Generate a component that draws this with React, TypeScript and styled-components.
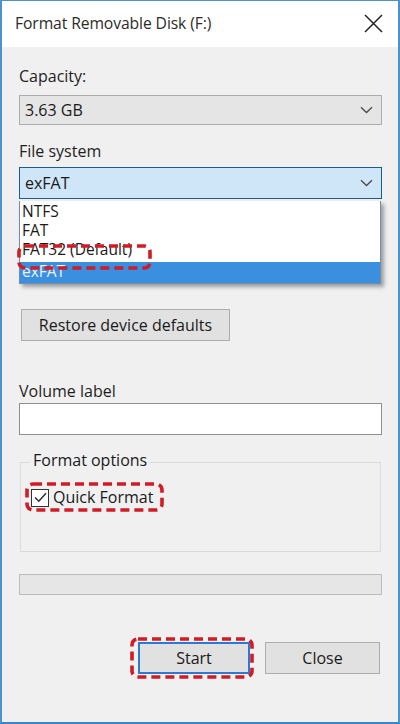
import styled, { createGlobalStyle } from 'styled-components';

const GlobalStyle = createGlobalStyle`
  html, body {
    margin: 0;
    padding: 0;
    background: #ffffff;
  }
  * {
    box-sizing: border-box;
  }
`;

const options = ['NTFS', 'FAT', 'FAT32 (Default)', 'exFAT'];

function Chevron() {
  return (
    <svg width="13" height="8" viewBox="0 0 13 8">
      <path d="M1 1.2 L6.5 6.5 L12 1.2" fill="none" stroke="#4a4a4a" strokeWidth="1.3" />
    </svg>
  );
}

function CloseIcon() {
  return (
    <svg width="19" height="19" viewBox="0 0 19 19">
      <path d="M1 1 L18 18 M18 1 L1 18" stroke="#222" strokeWidth="1.5" fill="none" />
    </svg>
  );
}

function Check() {
  return (
    <svg width="13" height="11" viewBox="0 0 13 11">
      <path d="M1 5.5 L4.8 9.2 L12 1.2" fill="none" stroke="#333" strokeWidth="1.6" />
    </svg>
  );
}

// red dashed highlight drawn over the screenshot
function Marker({ w, h, x, y }: { w: number; h: number; x: number; y: number }) {
  return (
    <MarkerBox width={w} height={h} viewBox={`0 0 ${w} ${h}`} style={{ left: x, top: y }}>
      <rect
        x="2"
        y="2"
        width={w - 4}
        height={h - 4}
        rx="6"
        fill="none"
        stroke="#d01c27"
        strokeWidth="3.6"
        strokeDasharray="9 5"
      />
    </MarkerBox>
  );
}

export default function App() {
  return (
    <>
      <GlobalStyle />
      <Window>
        <TitleBar>
          <Title>Format Removable Disk (F:)</Title>
          <CloseButton>
            <CloseIcon />
          </CloseButton>
        </TitleBar>
        <Body>
          <Label $top={18}>Capacity:</Label>
          <Combo>
            <span>3.63 GB</span>
            <Chevron />
          </Combo>

          <Label $top={15}>File system</Label>
          <ComboWrap>
            <Combo $active>
              <span>exFAT</span>
              <Chevron />
            </Combo>
            <DropList>
              {options.map((opt) => (
                <DropItem key={opt} $selected={opt === 'exFAT'}>
                  {opt}
                  {opt === 'FAT32 (Default)' && <Marker w={135} h={26} x={-3} y={4} />}
                </DropItem>
              ))}
            </DropList>
          </ComboWrap>

          <PushButton $width={209} $top={110} $left={2}>
            Restore device defaults
          </PushButton>

          <Label $top={39}>Volume label</Label>
          <TextBox />

          <GroupBox>
            <Legend>Format options</Legend>
            <CheckRow>
              <CheckBox>
                <Check />
              </CheckBox>
              Quick Format
              <Marker w={139} h={30} x={-6} y={-5} />
            </CheckRow>
          </GroupBox>

          <Progress />

          <ButtonRow>
            <MarkedButton>
              <PushButton $width={112} $primary>
                Start
              </PushButton>
              <Marker w={124} h={42} x={-8} y={-5} />
            </MarkedButton>
            <PushButton $width={115}>Close</PushButton>
          </ButtonRow>
        </Body>
      </Window>
    </>
  );
}

const Window = styled.div`
  width: 400px;
  height: 724px;
  display: flex;
  flex-direction: column;
  border-left: 2px solid #4a93cf;
  border-right: 2px solid #4a93cf;
  border-bottom: 2px solid #3d84c0;
  border-top: 1px solid #4a93cf;
  font-family: 'Open Sans', 'Noto Sans', sans-serif;
  font-size: 16px;
  color: #1a1a1a;
  overflow: hidden;
`;

const TitleBar = styled.div`
  height: 46px;
  flex-shrink: 0;
  background: #ffffff;
  display: flex;
  align-items: center;
  justify-content: space-between;
  padding: 0 13px 2px 13px;
`;

const Title = styled.div`
  font-size: 15.7px;
  color: #2b2b2b;
  letter-spacing: -0.1px;
`;

const CloseButton = styled.div`
  display: flex;
  align-items: center;
  justify-content: center;
  width: 24px;
  height: 24px;
`;

const Body = styled.div`
  flex: 1;
  background: #f0f0f0;
  padding: 0 16px 0 17px;
  display: flex;
  flex-direction: column;
`;

const Label = styled.div<{ $top: number }>`
  margin-top: ${(p) => p.$top}px;
  line-height: 22px;
  height: 22px;
  margin-bottom: 8px;
  color: #1e1e1e;
`;

const ComboWrap = styled.div`
  position: relative;
`;

const Combo = styled.div<{ $active?: boolean }>`
  height: ${(p) => (p.$active ? 32 : 30)}px;
  display: flex;
  align-items: center;
  justify-content: space-between;
  padding: 0 8px 0 5px;
  background: ${(p) => (p.$active ? '#cfe5f8' : '#e5e5e5')};
  border: 1px solid ${(p) => (p.$active ? '#1e5a8c' : '#acacac')};
  color: #1a1a1a;
  margin-top: ${(p) => (p.$active ? -3 : 0)}px;
`;

const DropList = styled.div`
  position: absolute;
  left: 0;
  top: 31px;
  width: 362px;
  background: #ffffff;
  border: 1px solid #6e8fb0;
  border-top: none;
  box-shadow: 3px 3px 4px rgba(0, 0, 0, 0.35);
  padding-top: 1px;
  z-index: 2;
`;

const DropItem = styled.div<{ $selected?: boolean }>`
  position: relative;
  height: ${(p) => (p.$selected ? 21 : 19)}px;
  line-height: 19px;
  font-size: 15.5px;
  padding-left: 2px;
  background: ${(p) => (p.$selected ? '#3b8fdf' : 'transparent')};
  color: ${(p) => (p.$selected ? '#eaf3fc' : '#1a1a1a')};
  margin-top: ${(p) => (p.$selected ? 3 : 0)}px;
`;

const MarkerBox = styled.svg`
  position: absolute;
  z-index: 3;
  overflow: visible;
  pointer-events: none;
`;

const PushButton = styled.div<{ $width: number; $top?: number; $left?: number; $primary?: boolean }>`
  width: ${(p) => p.$width}px;
  height: 32px;
  margin-top: ${(p) => p.$top ?? 0}px;
  margin-left: ${(p) => p.$left ?? 0}px;
  display: flex;
  align-items: center;
  justify-content: center;
  background: #e1e1e1;
  border: ${(p) => (p.$primary ? '2px solid #2a7ad0' : '1px solid #adadad')};
  color: #1a1a1a;
  flex-shrink: 0;
`;

const TextBox = styled.div`
  height: 32px;
  background: #ffffff;
  border: 1px solid #8f8f8f;
  margin-top: -7px;
`;

const GroupBox = styled.div`
  position: relative;
  margin-top: 27px;
  margin-left: 1px;
  margin-right: 1px;
  height: 90px;
  border: 1px solid #dadada;
  padding: 23px 0 0 10px;
`;

const Legend = styled.div`
  position: absolute;
  top: -14px;
  left: 9px;
  padding: 0 3px;
  background: #f0f0f0;
  line-height: 22px;
`;

const CheckRow = styled.div`
  position: relative;
  display: inline-flex;
  align-items: center;
  gap: 4px;
  height: 21px;
  line-height: 21px;
`;

const CheckBox = styled.div`
  width: 18px;
  height: 18px;
  border: 1px solid #333;
  background: #ffffff;
  display: flex;
  align-items: center;
  justify-content: center;
`;

const Progress = styled.div`
  margin-top: 22px;
  height: 21px;
  background: #e6e6e6;
  border: 1px solid #bcbcbc;
`;

const ButtonRow = styled.div`
  margin-top: 47px;
  display: flex;
  justify-content: flex-end;
  gap: 15px;
  padding-right: 2px;
`;

const MarkedButton = styled.div`
  position: relative;
`;
